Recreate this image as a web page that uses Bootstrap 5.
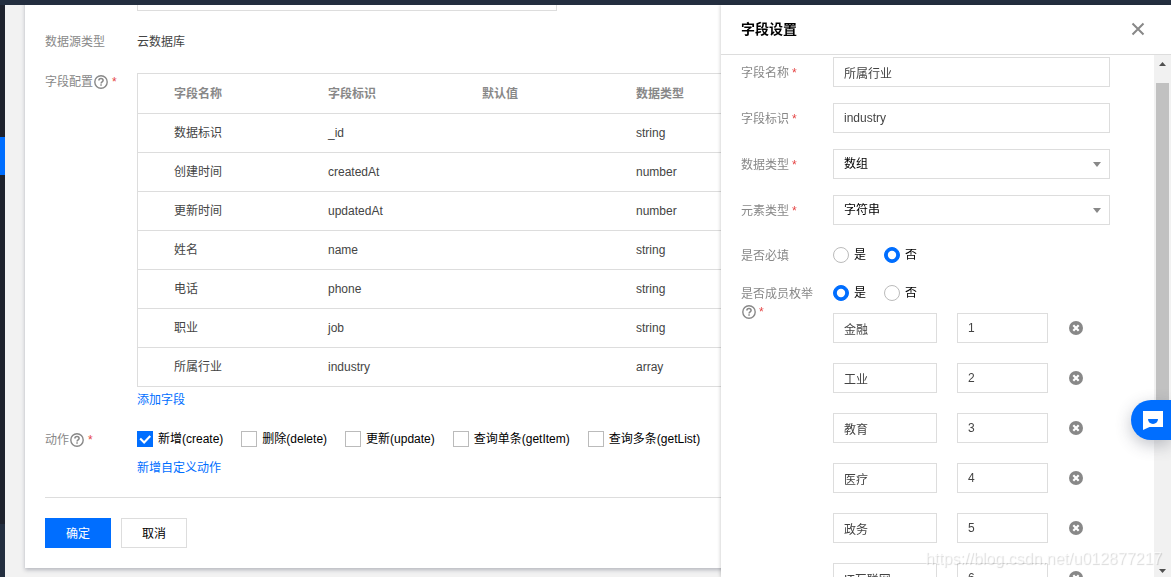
<!DOCTYPE html>
<html lang="zh-CN">
<head>
<meta charset="utf-8">
<meta name="viewport" content="width=device-width, initial-scale=1">
<title>字段设置</title>
<link href="https://cdn.jsdelivr.net/npm/bootstrap@5.3.0/dist/css/bootstrap.min.css" rel="stylesheet">
<style>
:root { --brand: #006eff; --line: #ddd; --muted: #888; }
body { font: 12px/20px "Liberation Sans", "Noto Sans CJK SC", sans-serif; color: #444; background: #f2f2f2; }
a { color: var(--brand); text-decoration: none; }
.topbar { height: 5px; background: #232e3f; }
.side-rail { width: 5px; background: #232e3f; }
.rail-dark { background: #1e222d; }
.rail-top { height: 132px; }
.rail-active { height: 38px; background: var(--brand); }
.rail-foot { height: 53px; }
.page-panel { margin: -44px 20px 0; padding: 20px; background: #fff; box-shadow: 0 2px 4px rgba(54,58,80,.32); }
.field-label, .field-text { padding-top: 2px; line-height: 18px; }
.field-label { width: 92px; padding-right: 18px; color: var(--muted); }
.star { color: #e54545; margin-left: 4px; }
.help { width: 14px; height: 14px; margin-left: 1px; color: var(--muted); vertical-align: -3px; }
.panel-row { margin-bottom: 20px; }
.form-control, .form-select { height: 30px; padding: 0 10px; border: 1px solid var(--line); border-radius: 0; font-size: 12px; line-height: 20px; color: #444; background-color: #fff; }
.form-select { color: #000; background-image: url("data:image/svg+xml,%3csvg xmlns='http://www.w3.org/2000/svg' viewBox='0 0 8 5'%3e%3cpath fill='%23888' d='M0 0h8L4 5z'/%3e%3c/svg%3e"); background-size: 8px 5px; background-position: right 8px center; }
.source-input { width: 420px; }
.schema { margin: 2px 0 2px; border: 1px solid var(--line); border-collapse: separate; border-spacing: 0; color: #444; table-layout: fixed; --bs-table-bg: #fff; }
.schema > :not(caption) > * > * { padding: 9px 0; border-bottom: 1px solid var(--line); color: #444; }
.schema > thead > tr > th { padding: 10px 0 9px; color: var(--muted); }
.schema > :not(caption) > tr > :first-child { padding-left: 36px; }
.schema > tbody > tr:last-child > td { border-bottom: 0; }
.col-first { width: 190px; }
.col-next { width: 154px; }
.options { gap: 18px; }
.form-check-input { width: 16px; height: 16px; margin: 0; border: 1px solid #bbb; }
.form-check-input[type=checkbox] { border-radius: 0; }
.form-check-input:checked { background-color: var(--brand); border-color: var(--brand); }
.form-check-input:checked[type=checkbox] { background-image: url("data:image/svg+xml,%3csvg xmlns='http://www.w3.org/2000/svg' viewBox='0 0 16 16'%3e%3cpath fill='none' stroke='%23fff' stroke-width='2.4' d='M2.500 7.500l4.500 4.500 7-7.500'/%3e%3c/svg%3e"); }
.form-check-input:checked[type=radio] { background-image: url("data:image/svg+xml,%3csvg xmlns='http://www.w3.org/2000/svg' viewBox='0 0 16 16'%3e%3ccircle cx='8' cy='8' r='4.200' fill='%23fff'/%3e%3c/svg%3e"); background-size: 16px 16px; }
.option { gap: 5px; color: #000; }
.add-link { line-height: 18px; padding-top: 2px; }
.custom-action { margin-top: 8px; }
.panel-actions { gap: 10px; border-top: 1px solid var(--line); padding-top: 20px; }
.btn { height: 30px; width: 66px; padding: 2px 0 0; border-radius: 0; font-size: 12px; line-height: 20px; }
.btn-confirm { background: var(--brand); color: #fff; }
.btn-cancel { background: #fff; border-color: var(--line); color: #000; }
.drawer { top: 5px; width: 450px; background: #fff; box-shadow: -1px 0 3px rgba(0,0,0,.16); z-index: 10; }
.drawer-head { height: 50px; padding: 0 26px 2px 20px; border-bottom: 1px solid var(--line); }
.drawer-head h2 { font-size: 14px; line-height: 20px; color: #000; }
.plain-btn { border: 0; padding: 0; background: none; color: var(--muted); line-height: 0; }
.drawer-form { padding: 2px 44px 0 20px; }
.drawer-form .star { margin-left: 3px; }
.text-row { margin-bottom: 16px; }
.radio-row { padding-top: 4px; margin-bottom: 14px; }
.enum-list { gap: 20px; margin-top: 10px; }
.enum-row { gap: 20px; }
.enum-row .plain-btn { padding-left: 1px; }
.enum-name { width: 104px; }
.enum-value { width: 91px; }
.scroll-track { width: 17px; background: #f1f1f1; padding: 7px 2px 4px; gap: 17px; }
.scroll-thumb { background: #c1c1c1; width: 13px; margin-bottom: 115px; }
.chat-tab { top: 400px; width: 40px; height: 40px; border: 0; padding: 0 0 0 4px; border-radius: 20px 0 0 20px; background: var(--brand); box-shadow: 0 5px 16px rgba(54,58,80,.3); z-index: 20; }
.watermark { right: 9px; bottom: 7px; font-size: 16px; line-height: 22px; color: rgba(255,255,255,.6); text-shadow: 1px 1px 1px rgba(0,0,0,.15); z-index: 30; pointer-events: none; }
</style>
</head>
<body class="vh-100 overflow-hidden d-flex flex-column">
<svg class="d-none" aria-hidden="true">
  <symbol id="i-help" viewBox="0 0 14 14"><circle cx="7" cy="7" r="6.2" fill="none" stroke="currentColor" stroke-width="1.4"/><path d="M4.9 5.6c0-1.3.9-2 2.1-2s2.1.7 2.1 1.8c0 1.4-2 1.5-2 3" fill="none" stroke="currentColor" stroke-width="1.5"/><path d="M6.3 9.3h1.5v1.5H6.3z" fill="currentColor"/></symbol>
  <symbol id="i-remove" viewBox="0 0 14 14"><circle cx="7" cy="7" r="7" fill="currentColor"/><path d="M4.300 4.300l5.400 5.400m0-5.400l-5.400 5.400" stroke="#fff" stroke-width="2.200"/></symbol>
</svg>
<header class="topbar flex-shrink-0"></header>
<div class="d-flex flex-grow-1 overflow-hidden">
  <nav class="side-rail d-flex flex-column flex-shrink-0" aria-label="导航">
    <div class="rail-dark rail-top"></div>
    <div class="rail-active"></div>
    <div class="rail-dark flex-grow-1"></div>
    <div class="rail-foot"></div>
  </nav>
  <main class="flex-grow-1 overflow-hidden">
    <form class="page-panel">
      <div class="panel-row d-flex">
        <div class="field-label flex-shrink-0"></div>
        <input class="form-control source-input" aria-label="数据源">
      </div>
      <div class="panel-row d-flex">
        <div class="field-label flex-shrink-0">数据源类型</div>
        <div class="field-text">云数据库</div>
      </div>
      <div class="panel-row d-flex">
        <div class="field-label flex-shrink-0 text-nowrap">字段配置<svg class="help"><use href="#i-help"/></svg><span class="star">*</span></div>
        <div class="flex-grow-1">
          <table class="table schema">
            <colgroup><col class="col-first"><col class="col-next"><col class="col-next"><col></colgroup>
            <thead><tr><th>字段名称</th><th>字段标识</th><th>默认值</th><th>数据类型</th></tr></thead>
            <tbody>
              <tr><td>数据标识</td><td>_id</td><td></td><td>string</td></tr>
              <tr><td>创建时间</td><td>createdAt</td><td></td><td>number</td></tr>
              <tr><td>更新时间</td><td>updatedAt</td><td></td><td>number</td></tr>
              <tr><td>姓名</td><td>name</td><td></td><td>string</td></tr>
              <tr><td>电话</td><td>phone</td><td></td><td>string</td></tr>
              <tr><td>职业</td><td>job</td><td></td><td>string</td></tr>
              <tr><td>所属行业</td><td>industry</td><td></td><td>array</td></tr>
            </tbody>
          </table>
          <a href="#" class="add-link d-block">添加字段</a>
        </div>
      </div>
      <div class="panel-row d-flex">
        <div class="field-label flex-shrink-0">动作<svg class="help"><use href="#i-help"/></svg><span class="star">*</span></div>
        <div>
          <div class="options d-flex">
            <label class="option d-flex align-items-center"><input type="checkbox" class="form-check-input" checked>新增(create)</label>
            <label class="option d-flex align-items-center"><input type="checkbox" class="form-check-input">删除(delete)</label>
            <label class="option d-flex align-items-center"><input type="checkbox" class="form-check-input">更新(update)</label>
            <label class="option d-flex align-items-center"><input type="checkbox" class="form-check-input">查询单条(getItem)</label>
            <label class="option d-flex align-items-center"><input type="checkbox" class="form-check-input">查询多条(getList)</label>
          </div>
          <a href="#" class="add-link custom-action d-block">新增自定义动作</a>
        </div>
      </div>
      <div class="panel-actions d-flex">
        <button type="button" class="btn btn-confirm">确定</button>
        <button type="button" class="btn btn-cancel">取消</button>
      </div>
    </form>
  </main>
</div>

<aside class="drawer position-fixed end-0 bottom-0 d-flex flex-column">
  <div class="drawer-head d-flex align-items-center justify-content-between flex-shrink-0">
    <h2 class="fw-bold m-0">字段设置</h2>
    <button type="button" class="plain-btn" aria-label="关闭"><svg width="14" height="14" viewBox="0 0 14 14"><path d="M1.5 1.5l11 11m0-11l-11 11" stroke="currentColor" stroke-width="2"/></svg></button>
  </div>
  <div class="d-flex flex-grow-1 overflow-hidden">
    <form class="drawer-form flex-grow-1 overflow-hidden">
      <div class="text-row d-flex align-items-center"><label class="field-label flex-shrink-0" for="f-name">字段名称<span class="star">*</span></label><input id="f-name" class="form-control" value="所属行业"></div>
      <div class="text-row d-flex align-items-center"><label class="field-label flex-shrink-0" for="f-key">字段标识<span class="star">*</span></label><input id="f-key" class="form-control" value="industry"></div>
      <div class="text-row d-flex align-items-center"><label class="field-label flex-shrink-0" for="f-type">数据类型<span class="star">*</span></label><select id="f-type" class="form-select"><option>数组</option></select></div>
      <div class="text-row d-flex align-items-center"><label class="field-label flex-shrink-0" for="f-item">元素类型<span class="star">*</span></label><select id="f-item" class="form-select"><option>字符串</option></select></div>
      <div class="radio-row d-flex">
        <div class="field-label flex-shrink-0">是否必填</div>
        <div class="options d-flex">
          <label class="option d-flex align-items-center"><input type="radio" name="required" class="form-check-input">是</label>
          <label class="option d-flex align-items-center"><input type="radio" name="required" class="form-check-input" checked>否</label>
        </div>
      </div>
      <div class="radio-row d-flex">
        <div class="field-label flex-shrink-0">是否成员枚举<svg class="help"><use href="#i-help"/></svg><span class="star">*</span></div>
        <div>
          <div class="options d-flex">
            <label class="option d-flex align-items-center"><input type="radio" name="enum" class="form-check-input" checked>是</label>
            <label class="option d-flex align-items-center"><input type="radio" name="enum" class="form-check-input">否</label>
          </div>
          <div class="enum-list d-flex flex-column">
            <div class="enum-row d-flex align-items-center"><input class="form-control enum-name" aria-label="名称" value="金融"><input class="form-control enum-value" aria-label="值" value="1"><button type="button" class="plain-btn" aria-label="删除"><svg width="14" height="14"><use href="#i-remove"/></svg></button></div>
            <div class="enum-row d-flex align-items-center"><input class="form-control enum-name" aria-label="名称" value="工业"><input class="form-control enum-value" aria-label="值" value="2"><button type="button" class="plain-btn" aria-label="删除"><svg width="14" height="14"><use href="#i-remove"/></svg></button></div>
            <div class="enum-row d-flex align-items-center"><input class="form-control enum-name" aria-label="名称" value="教育"><input class="form-control enum-value" aria-label="值" value="3"><button type="button" class="plain-btn" aria-label="删除"><svg width="14" height="14"><use href="#i-remove"/></svg></button></div>
            <div class="enum-row d-flex align-items-center"><input class="form-control enum-name" aria-label="名称" value="医疗"><input class="form-control enum-value" aria-label="值" value="4"><button type="button" class="plain-btn" aria-label="删除"><svg width="14" height="14"><use href="#i-remove"/></svg></button></div>
            <div class="enum-row d-flex align-items-center"><input class="form-control enum-name" aria-label="名称" value="政务"><input class="form-control enum-value" aria-label="值" value="5"><button type="button" class="plain-btn" aria-label="删除"><svg width="14" height="14"><use href="#i-remove"/></svg></button></div>
            <div class="enum-row d-flex align-items-center"><input class="form-control enum-name" aria-label="名称" value="IT互联网"><input class="form-control enum-value" aria-label="值" value="6"><button type="button" class="plain-btn" aria-label="删除"><svg width="14" height="14"><use href="#i-remove"/></svg></button></div>
          </div>
        </div>
      </div>
    </form>
    <div class="scroll-track d-flex flex-column align-items-center flex-shrink-0" aria-hidden="true">
      <svg class="flex-shrink-0" width="7" height="4" viewBox="0 0 7 4"><path d="M0 4L3.5 0 7 4z" fill="#505050"/></svg>
      <div class="scroll-thumb flex-grow-1"></div>
      <svg class="flex-shrink-0" width="7" height="4" viewBox="0 0 7 4"><path d="M0 0h7L3.5 4z" fill="#505050"/></svg>
    </div>
  </div>
</aside>
<button type="button" class="chat-tab position-fixed end-0 d-flex align-items-center justify-content-center" aria-label="在线咨询"><svg width="20" height="20" viewBox="0 0 20 20"><path d="M0 1h20v16H6.500L0 20z" fill="#fff"/><path d="M5 9h10a5 5 0 0 1-10 0z" fill="#006eff"/></svg></button>
<div class="watermark position-fixed">https://blog.csdn.net/u012877217</div>
<script src="https://cdn.jsdelivr.net/npm/bootstrap@5.3.0/dist/js/bootstrap.bundle.min.js"></script>
</body>
</html>
